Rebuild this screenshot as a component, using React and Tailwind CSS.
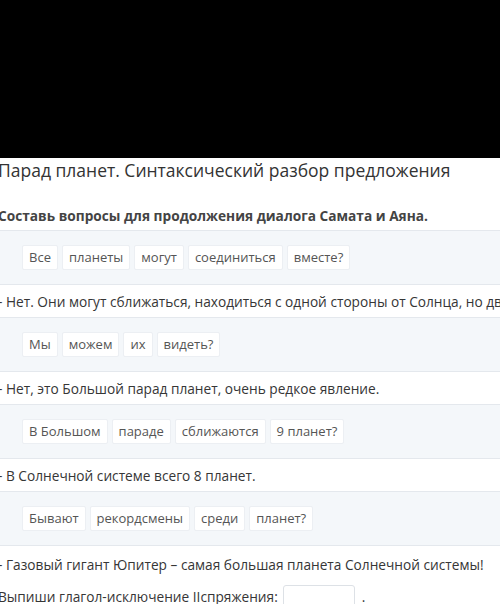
const rows = [
  { type: 'words', words: ['Все', 'планеты', 'могут', 'соединиться', 'вместе?'] },
  { type: 'line', text: '- Нет. Они могут сближаться, находиться с одной стороны от Солнца, но две' },
  { type: 'words', words: ['Мы', 'можем', 'их', 'видеть?'] },
  { type: 'line', text: '- Нет, это Большой парад планет, очень редкое явление.' },
  { type: 'words', words: ['В Большом', 'параде', 'сближаются', '9 планет?'] },
  { type: 'line', text: '- В Солнечной системе всего 8 планет.' },
  { type: 'words', words: ['Бывают', 'рекордсмены', 'среди', 'планет?'] },
]

function WordRow({ words }) {
  return (
    <div className="flex h-[54px] items-center gap-[4px] border-b border-[#e4e8ed] bg-[#f4f7fa] pl-[24px]">
      {words.map((w) => (
        <span
          key={w}
          className="flex h-[25px] items-center rounded-[2px] border border-[#eceff3] bg-white px-[6px] text-[13px] text-[#555]"
        >
          {w}
        </span>
      ))}
    </div>
  )
}

export default function App() {
  return (
    <div className="h-[604px] w-[500px] overflow-hidden bg-white font-['Open_Sans',sans-serif] text-[#363636]">
      <div className="h-[158px] bg-black" />
      <div className="-ml-[2px] w-[560px]">
        <h1 className="h-[32px] whitespace-nowrap text-[17.5px] leading-[24px] text-[#333]">
          Парад планет. Синтаксический разбор предложения
        </h1>
        <p className="flex h-[41px] items-end whitespace-nowrap border-b border-[#e4e8ed] pb-[3px] text-[13.7px] font-bold text-[#444]">
          Составь вопросы для продолжения диалога Самата и Аяна.
        </p>
        {rows.map((row, i) =>
          row.type === 'words' ? (
            <WordRow key={i} words={row.words} />
          ) : (
            <div
              key={i}
              className="flex h-[33px] items-center whitespace-nowrap border-b border-[#e4e8ed] pt-[2px] text-[13.7px]"
            >
              {row.text}
            </div>
          ),
        )}
        <div className="flex h-[37px] items-center whitespace-nowrap pt-[2px] text-[13.7px]">
          - Газовый гигант Юпитер – самая большая планета Солнечной системы!
        </div>
        <div className="flex h-[28px] items-center whitespace-nowrap text-[13.7px]">
          <span>Выпиши глагол-исключение IIспряжения:</span>
          <span className="ml-[5px] h-[24px] w-[72px] rounded-[3px] border border-[#dde1e6] bg-white" />
          <span className="ml-[7px]">.</span>
        </div>
      </div>
    </div>
  )
}
